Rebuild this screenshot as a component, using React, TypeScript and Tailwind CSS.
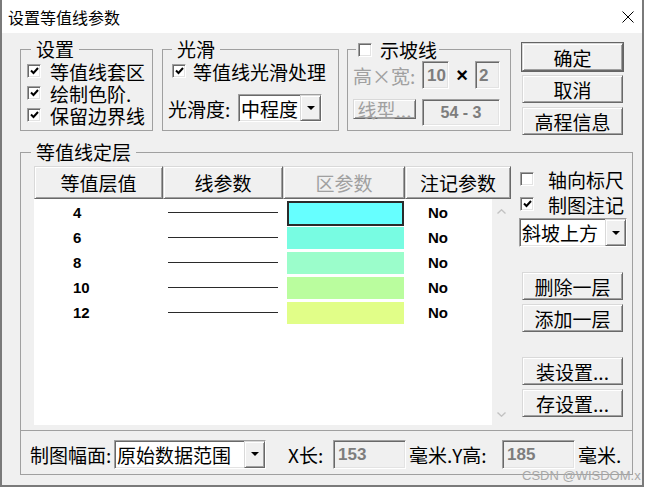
import React from 'react';

// classic 3D borders
const raised =
  'border border-t-[#d9d9d9] border-l-[#d9d9d9] border-r-[#696969] border-b-[#696969] shadow-[inset_1px_1px_0_#ffffff,inset_-1px_-1px_0_#a0a0a0]';
const sunken =
  'border border-t-[#a0a0a0] border-l-[#a0a0a0] border-r-[#ffffff] border-b-[#ffffff] shadow-[inset_1px_1px_0_#696969,inset_-1px_-1px_0_#e3e3e3]';

interface Layer {
  value: string;
  color: string;
}

const layers: Layer[] = [
  { value: '4', color: '#66ffff' },
  { value: '6', color: '#78fce2' },
  { value: '8', color: '#9bfdcb' },
  { value: '10', color: '#bafd9e' },
  { value: '12', color: '#e1fe88' },
];

const CheckBox: React.FC<{ checked?: boolean }> = ({ checked = false }) => (
  <span className={`w-[14px] h-[14px] bg-white flex items-center justify-center shrink-0 ${sunken}`}>
    {checked && (
      <svg width="9" height="8" viewBox="0 0 9 8">
        <path d="M1 3.5 L3.5 6 L8 1" stroke="#000" strokeWidth="2" fill="none" />
      </svg>
    )}
  </span>
);

const DropArrow = () => (
  <svg width="8" height="4" viewBox="0 0 8 4">
    <path d="M0 0h8L4 4z" fill="#000" />
  </svg>
);

const Combo: React.FC<{ text: string; className: string }> = ({ text, className }) => (
  <div className={`bg-white flex items-stretch ${sunken} ${className}`}>
    <span className="flex-1 overflow-hidden whitespace-nowrap pl-[2px] flex items-center leading-none">{text}</span>
    <span className={`w-[21px] bg-[#f0f0f0] flex items-center justify-center shrink-0 ${raised}`}>
      <DropArrow />
    </span>
  </div>
);

const Button: React.FC<{ label: string; className?: string }> = ({ label, className = '' }) => (
  <button
    type="button"
    className={`w-[101px] h-[28px] flex items-center justify-center bg-[#f0f0f0] leading-none ${raised} ${className}`}
  >
    {label}
  </button>
);

const Field: React.FC<{ text: string; className: string }> = ({ text, className }) => (
  <div
    className={`bg-[#f0f0f0] flex items-center font-['Liberation_Sans',sans-serif] font-bold text-[#7d7d7d] leading-none ${sunken} ${className}`}
  >
    {text}
  </div>
);

const App: React.FC = () => {
  return (
    <div className="w-[653px] h-[489px] bg-white relative font-['Noto_Sans_CJK_SC',sans-serif] text-[19px] text-black">
      <div className="w-[644px] h-[487px] border-l-2 border-r-2 border-b-2 border-[#7a7a7a] flex flex-col">
        {/* title bar */}
        <div className="h-[33px] bg-white flex items-center justify-between pl-[6px] pr-[8px] shrink-0">
          <span className="text-[16px] leading-none">设置等值线参数</span>
          <svg width="12" height="12" viewBox="0 0 12 12">
            <path d="M0.5 0.5 L11.5 11.5 M11.5 0.5 L0.5 11.5" stroke="#000" strokeWidth="1" />
          </svg>
        </div>

        <div className="flex-1 bg-[#f0f0f0] pl-[18px] pt-[6px] flex flex-col">
          {/* top row */}
          <div className="flex items-start h-[96px]">
            <fieldset className="w-[133px] h-[92px] border border-[#a0a0a0]">
              <legend className="ml-[10px] px-[5px] leading-[20px]">设置</legend>
              <div className="pl-[6px] pt-[1px] flex flex-col">
                {['等值线套区', '绘制色阶.', '保留边界线'].map((t) => (
                  <div key={t} className="h-[22px] flex items-center whitespace-nowrap">
                    <CheckBox checked />
                    <span className="ml-[9px] leading-none">{t}</span>
                  </div>
                ))}
              </div>
            </fieldset>

            <fieldset className="ml-[9px] w-[177px] h-[92px] border border-[#a0a0a0]">
              <legend className="ml-[9px] px-[5px] leading-[20px]">光滑</legend>
              <div className="pt-[1px] flex flex-col">
                <div className="ml-[9px] h-[22px] flex items-center whitespace-nowrap">
                  <CheckBox checked />
                  <span className="ml-[7px] leading-none">等值线光滑处理</span>
                </div>
                <div className="ml-[5px] mt-[12px] h-[28px] flex items-center">
                  <span className="w-[70px] whitespace-nowrap leading-none">光滑度:</span>
                  <Combo text="中程度" className="w-[84px] h-[28px]" />
                </div>
              </div>
            </fieldset>

            <fieldset className="ml-[8px] w-[164px] h-[92px] border border-[#a0a0a0]">
              <legend className="ml-[8px] px-[2px] leading-[20px]">
                <span className="inline-flex items-center">
                  <CheckBox />
                  <span className="ml-[8px] leading-[20px]">示坡线</span>
                </span>
              </legend>
              <div className="pt-[1px] flex flex-col">
                <div className="ml-[5px] h-[28px] flex items-center">
                  <span className="w-[69px] whitespace-nowrap text-[#a0a0a0] leading-none">高×宽:</span>
                  <Field text="10" className="w-[27px] h-[28px] pl-[4px] text-[17px]" />
                  <span className="w-[26px] text-center font-['Liberation_Sans',sans-serif] font-bold text-[20px] leading-none">
                    ×
                  </span>
                  <Field text="2" className="w-[25px] h-[28px] pl-[3px] text-[17px]" />
                </div>
                <div className="ml-[5px] mt-[10px] flex items-start">
                  <button
                    type="button"
                    className={`w-[63px] h-[20px] flex items-center justify-center bg-[#f0f0f0] text-[#a0a0a0] leading-none whitespace-nowrap ${raised}`}
                  >
                    线型...
                  </button>
                  <Field text="54 - 3" className="ml-[6px] w-[78px] h-[27px] justify-center text-[16px] whitespace-pre" />
                </div>
              </div>
            </fieldset>

            <div className="ml-[11px] mt-[4px] flex flex-col gap-[4px]">
              <Button label="确定" className="outline outline-1 outline-[#646464]" />
              <Button label="取消" />
              <Button label="高程信息" />
            </div>
          </div>

          {/* layer group */}
          <fieldset className="mt-[7px] w-[613px] h-[333px] border border-[#a0a0a0]">
            <legend className="ml-[10px] px-[5px] leading-[20px]">等值线定层</legend>
            <div className="mt-[4px] pl-[13px] flex items-start">
              <div className="w-[477px] flex flex-col">
                <div className="flex h-[33px]">
                  {[
                    { t: '等值层值', w: 'w-[129px]', c: '' },
                    { t: '线参数', w: 'w-[120px]', c: '' },
                    { t: '区参数', w: 'w-[122px]', c: 'text-[#a0a0a0]' },
                    { t: '注记参数', w: 'w-[106px]', c: '' },
                  ].map((h) => (
                    <div
                      key={h.t}
                      className={`${h.w} h-[33px] flex items-center justify-center leading-none bg-[#f0f0f0] ${h.c} ${raised}`}
                    >
                      {h.t}
                    </div>
                  ))}
                </div>
                <div className="flex h-[226px]">
                  <div className="w-[458px] bg-white pt-[1px] flex flex-col">
                    {layers.map((l, i) => (
                      <div key={l.value} className="h-[25px] flex items-start font-['Liberation_Sans',sans-serif] font-bold text-[15px]">
                        <div className="w-[129px] h-[25px] pl-[39px] flex items-center leading-none">{l.value}</div>
                        <div className="w-[120px] h-[25px] pl-[5px] flex items-center">
                          <div className="w-[110px] h-[1px] bg-[#2a2a2a]" />
                        </div>
                        <div className="w-[122px] h-[25px] pl-[4px]">
                          {i === 0 ? (
                            <div
                              className="w-[117px] h-[25px] mt-[1px] border-2 border-[#2b2b2b]"
                              style={{ backgroundColor: l.color }}
                            />
                          ) : (
                            <div className="w-[117px] h-[22px] mt-[2px]" style={{ backgroundColor: l.color }} />
                          )}
                        </div>
                        <div className="h-[25px] pl-[23px] flex items-center leading-none">No</div>
                      </div>
                    ))}
                  </div>
                  <div className="w-[19px] flex flex-col items-center justify-between pt-[10px] pb-[8px]">
                    <svg width="9" height="5" viewBox="0 0 9 5">
                      <path d="M0.5 4.5 L4.5 0.8 L8.5 4.5" stroke="#c2c2c2" strokeWidth="1.4" fill="none" />
                    </svg>
                    <svg width="9" height="5" viewBox="0 0 9 5">
                      <path d="M0.5 0.5 L4.5 4.2 L8.5 0.5" stroke="#c2c2c2" strokeWidth="1.4" fill="none" />
                    </svg>
                  </div>
                </div>
              </div>

              <div className="ml-[8px] w-[110px] flex flex-col">
                <div className="h-[26px] flex items-center pl-[1px] whitespace-nowrap">
                  <CheckBox />
                  <span className="ml-[14px] leading-none">轴向标尺</span>
                </div>
                <div className="h-[24px] flex items-center pl-[1px] whitespace-nowrap">
                  <CheckBox checked />
                  <span className="ml-[14px] leading-none">制图注记</span>
                </div>
                <Combo text="斜坡上方" className="mt-[2px] w-[108px] h-[29px]" />
                <div className="ml-[3px] flex flex-col">
                  <Button label="删除一层" className="mt-[25px]" />
                  <Button label="添加一层" className="mt-[4px]" />
                  <Button label="装设置..." className="mt-[25px]" />
                  <Button label="存设置..." className="mt-[4px]" />
                </div>
              </div>
            </div>

            <div className="mt-[5px] border-t border-[#a0a0a0] h-[43px] pt-[4px] pl-[9px] flex items-center whitespace-nowrap">
              <span className="w-[84px] leading-none">制图幅面:</span>
              <Combo text="原始数据范围" className="w-[152px] h-[29px]" />
              <span className="ml-[22px] w-[45px] leading-none">X长:</span>
              <Field text="153" className="w-[73px] h-[29px] pl-[4px] text-[17px]" />
              <span className="ml-[3px] w-[93px] leading-none">毫米.Y高:</span>
              <Field text="185" className="w-[73px] h-[29px] pl-[4px] text-[17px]" />
              <span className="ml-[3px] leading-none">毫米.</span>
            </div>
          </fieldset>
        </div>
      </div>

      <span className="absolute left-[522px] top-[469px] font-['Liberation_Sans',sans-serif] text-[13px] text-[#a8a8a8] leading-none">
        CSDN @WISDOM.x
      </span>
    </div>
  );
};

export default App;
